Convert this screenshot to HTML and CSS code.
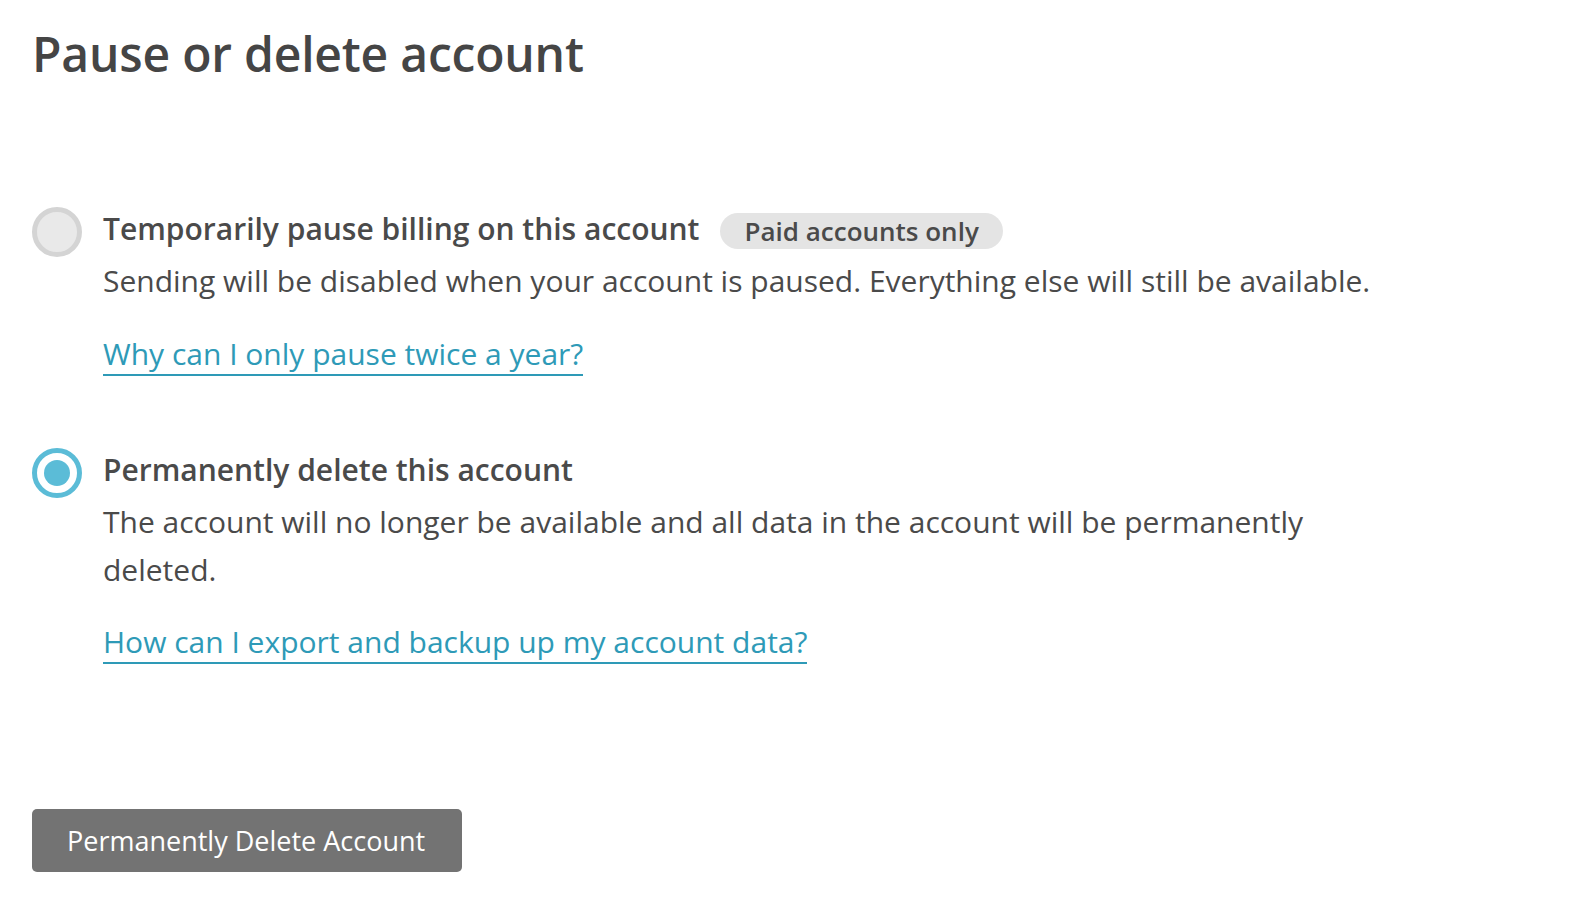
FILE: index.html
```html
<!DOCTYPE html>
<html lang="en">
<head>
<meta charset="utf-8">
<title>Pause or delete account</title>
<link rel="stylesheet" href="styles.css">
</head>
<body>
<main class="page">
  <h1 class="page-title">Pause or delete account</h1>

  <div class="options">
    <div class="option">
      <span class="radio"></span>
      <div class="option-body">
        <div class="option-title">
          <span>Temporarily pause billing on this account</span>
          <span class="badge">Paid accounts only</span>
        </div>
        <p class="option-desc">Sending will be disabled when your account is paused. Everything else will still be available.</p>
        <p class="option-link"><a href="#">Why can I only pause twice a year?</a></p>
      </div>
    </div>

    <div class="option">
      <span class="radio radio-checked"><span class="radio-dot"></span></span>
      <div class="option-body">
        <div class="option-title">
          <span>Permanently delete this account</span>
        </div>
        <p class="option-desc">The account will no longer be available and all data in the account will be permanently deleted.</p>
        <p class="option-link"><a href="#">How can I export and backup up my account data?</a></p>
      </div>
    </div>
  </div>

  <button class="btn-delete" type="button">Permanently Delete Account</button>
</main>
</body>
</html>
```

FILE: styles.css
```css
* { box-sizing: border-box; }

html, body {
  margin: 0;
  padding: 0;
  background: #ffffff;
}

body {
  font-family: "Open Sans", "Noto Sans", sans-serif;
  color: #4a4a4a;
  font-size: 30px;
  line-height: 1.6;
}

.page {
  padding: 25px 32px 0 32px;
}

.page-title {
  margin: 0;
  font-size: 48px;
  font-weight: 600;
  line-height: 58px;
  color: #454545;
  letter-spacing: -0.2px;
}

.options {
  margin-top: 122px;
  display: flex;
  flex-direction: column;
  gap: 69px;
  width: 1372px;
}

.option {
  display: flex;
  align-items: flex-start;
  gap: 21px;
}

.radio {
  flex: 0 0 auto;
  width: 50px;
  height: 50px;
  border-radius: 50%;
  border: 5px solid #d4d4d4;
  background: #e9e9e9;
  margin-top: 2px;
  display: flex;
  align-items: center;
  justify-content: center;
}

.radio-checked {
  border-color: #5bbcd7;
  background: #ffffff;
}

.radio-dot {
  width: 26px;
  height: 26px;
  border-radius: 50%;
  background: #5bbcd7;
}

.option-body {
  flex: 1 1 auto;
}

.option-title {
  display: flex;
  align-items: center;
  gap: 21px;
  font-weight: 600;
  font-size: 30px;
  line-height: 48px;
  margin-bottom: 4px;
}

.badge {
  display: inline-flex;
  align-items: center;
  height: 36px;
  padding: 0 24px;
  border-radius: 18px;
  background: #e4e4e4;
  font-size: 26px;
  font-weight: 600;
  line-height: 36px;
  color: #4a4a4a;
  margin-top: 3px;
}

.option-desc {
  margin: 0;
  font-size: 30px;
  line-height: 47.5px;
}

.option-link {
  margin: 25px 0 0 0;
  font-size: 30px;
  line-height: 47.5px;
}

.option-link a {
  color: #2e9ab7;
  text-decoration: none;
  border-bottom: 2px solid #2e9ab7;
}

.btn-delete {
  margin-top: 143px;
  display: inline-flex;
  align-items: center;
  height: 63px;
  padding: 0 37px 0 35px;
  border: none;
  border-radius: 5px;
  background: #737373;
  color: #ffffff;
  font-family: "Open Sans", "Noto Sans", sans-serif;
  font-size: 27px;
  font-weight: 400;
  cursor: pointer;
}
```
